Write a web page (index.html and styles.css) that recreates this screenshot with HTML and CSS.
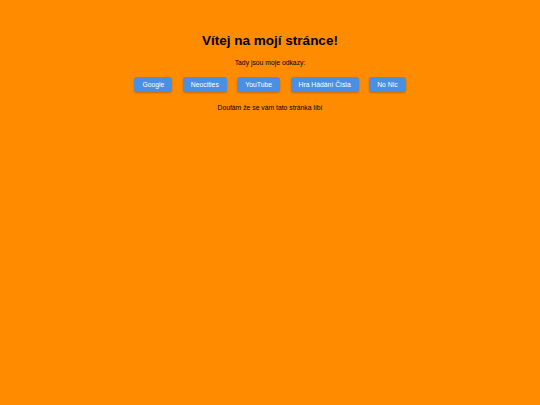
FILE: index.html
```html
<!DOCTYPE html>
<html lang="cs">
<head>
<meta charset="utf-8">
<title>Vítej na mojí stránce!</title>
<link rel="stylesheet" href="styles.css">
</head>
<body>
<main class="page">
  <h1 class="title">Vítej na mojí stránce!</h1>
  <p class="intro">Tady jsou moje odkazy:</p>
  <nav class="links">
    <a class="btn" href="#">Google</a>
    <a class="btn" href="#">Neocities</a>
    <a class="btn" href="#">YouTube</a>
    <a class="btn" href="#">Hra Hádání Čísla</a>
    <a class="btn" href="#">No Nic</a>
  </nav>
  <p class="outro">Doufám že se vám tato stránka líbí</p>
</main>
</body>
</html>
```
FILE: styles.css
```css
html, body {
  margin: 0;
  padding: 0;
  background: #ff8c00;
}
body {
  font-family: "Liberation Sans", Arial, sans-serif;
  color: #000;
  width: 540px;
  height: 405px;
}
.page {
  display: flex;
  flex-direction: column;
  align-items: center;
  padding-top: 33px;
}
.title {
  margin: 0;
  font-size: 13.5px;
  line-height: 16px;
  font-weight: bold;
}
.intro {
  margin: 9px 0 0;
  font-size: 6.8px;
  line-height: 9px;
}
.links {
  display: flex;
  gap: 10.5px;
  margin-top: 10px;
}
.btn {
  display: block;
  background: #4a90e2;
  color: #fff;
  text-decoration: none;
  font-size: 6.8px;
  line-height: 15px;
  height: 15px;
  padding: 0 8px;
  border-radius: 3px;
  box-shadow: 0 1px 2px rgba(0, 0, 0, 0.25);
}
.outro {
  margin: 11px 0 0;
  font-size: 6.8px;
  line-height: 9px;
}
```
